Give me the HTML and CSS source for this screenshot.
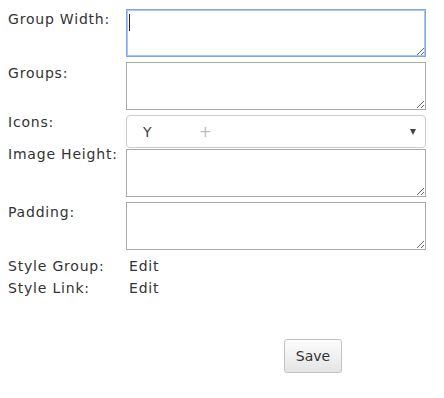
FILE: index.html
```html
<!DOCTYPE html>
<html lang="en">
<head>
    <meta charset="UTF-8">
    <title>Group Settings</title>
    <link rel="stylesheet" href="styles.css">
</head>
<body>
    <div class="settings">
        <label class="field-label" for="group-width">Group Width:</label>
        <div class="field-wrap">
            <textarea id="group-width" class="field focused"></textarea>
            <span class="caret"></span>
        </div>

        <label class="field-label low" for="groups">Groups:</label>
        <textarea id="groups" class="field"></textarea>

        <label class="field-label top">Icons:</label>
        <div class="picker">
            <span class="picker-value">Y</span>
            <span class="picker-add">+</span>
            <span class="picker-arrow"></span>
        </div>

        <label class="field-label raised" for="image-height">Image Height:</label>
        <textarea id="image-height" class="field"></textarea>

        <label class="field-label" for="padding">Padding:</label>
        <textarea id="padding" class="field"></textarea>
    </div>

    <div class="styles">
        <span>Style Group:</span>
        <span class="edit-link">Edit</span>
        <span>Style Link:</span>
        <span class="edit-link">Edit</span>
    </div>

    <div class="actions">
        <button class="save-button">Save</button>
    </div>
</body>
</html>
```

FILE: styles.css
```css
body {
    margin: 8px;
    font-family: "DejaVu Sans", Verdana, sans-serif;
    font-size: 14px;
    color: #333;
    background-color: #fff;
}
.settings {
    display: grid;
    grid-template-columns: 118px 300px;
    row-gap: 5px;
    padding-top: 1px;
}
.field-label {
    padding-top: 3px;
    line-height: 14px;
    letter-spacing: 0.8px;
}
.field-label.low {
    padding-top: 4px;
}
.field-label.top {
    padding-top: 0;
}
.field-label.raised {
    padding-top: 0;
    margin-top: -2px;
}
.field-wrap {
    position: relative;
    height: 48px;
}
.field {
    display: block;
    box-sizing: border-box;
    width: 300px;
    height: 48px;
    margin: 0;
    border: 1px solid #a9a9a9;
    padding: 2px;
    font-family: inherit;
    font-size: 14px;
    resize: both;
}
.field.focused {
    border-color: #7aa7f0;
    box-shadow: 0 0 0 1px #a9c6f5 inset;
    outline: none;
}
.caret {
    position: absolute;
    left: 3px;
    top: 5px;
    width: 1px;
    height: 17px;
    background-color: #222;
}
.picker {
    box-sizing: border-box;
    height: 33px;
    margin-bottom: -4px;
    display: flex;
    align-items: center;
    border: 1px solid #ccc;
    border-radius: 4px;
    padding: 0 9px 0 16px;
}
.picker-value {
    width: 56px;
    color: #444;
}
.picker-add {
    color: #bbb;
    font-size: 15px;
}
.picker-arrow {
    margin-left: auto;
    width: 0;
    height: 0;
    border-left: 3px solid transparent;
    border-right: 3px solid transparent;
    border-top: 6px solid #444;
}
.styles {
    display: grid;
    grid-template-columns: 118px 300px;
    margin-top: 5px;
    line-height: 22px;
    letter-spacing: 0.8px;
}
.edit-link {
    padding-left: 3px;
}
.actions {
    display: flex;
    padding-left: 276px;
    margin-top: 40px;
}
.save-button {
    width: 58px;
    height: 34px;
    border: 1px solid #c4c4c4;
    border-radius: 3px;
    background: linear-gradient(#fdfdfd, #e4e4e4);
    font-family: inherit;
    font-size: 14px;
    color: #333;
    box-shadow: 0 1px 1px rgba(0, 0, 0, 0.08);
}
```
